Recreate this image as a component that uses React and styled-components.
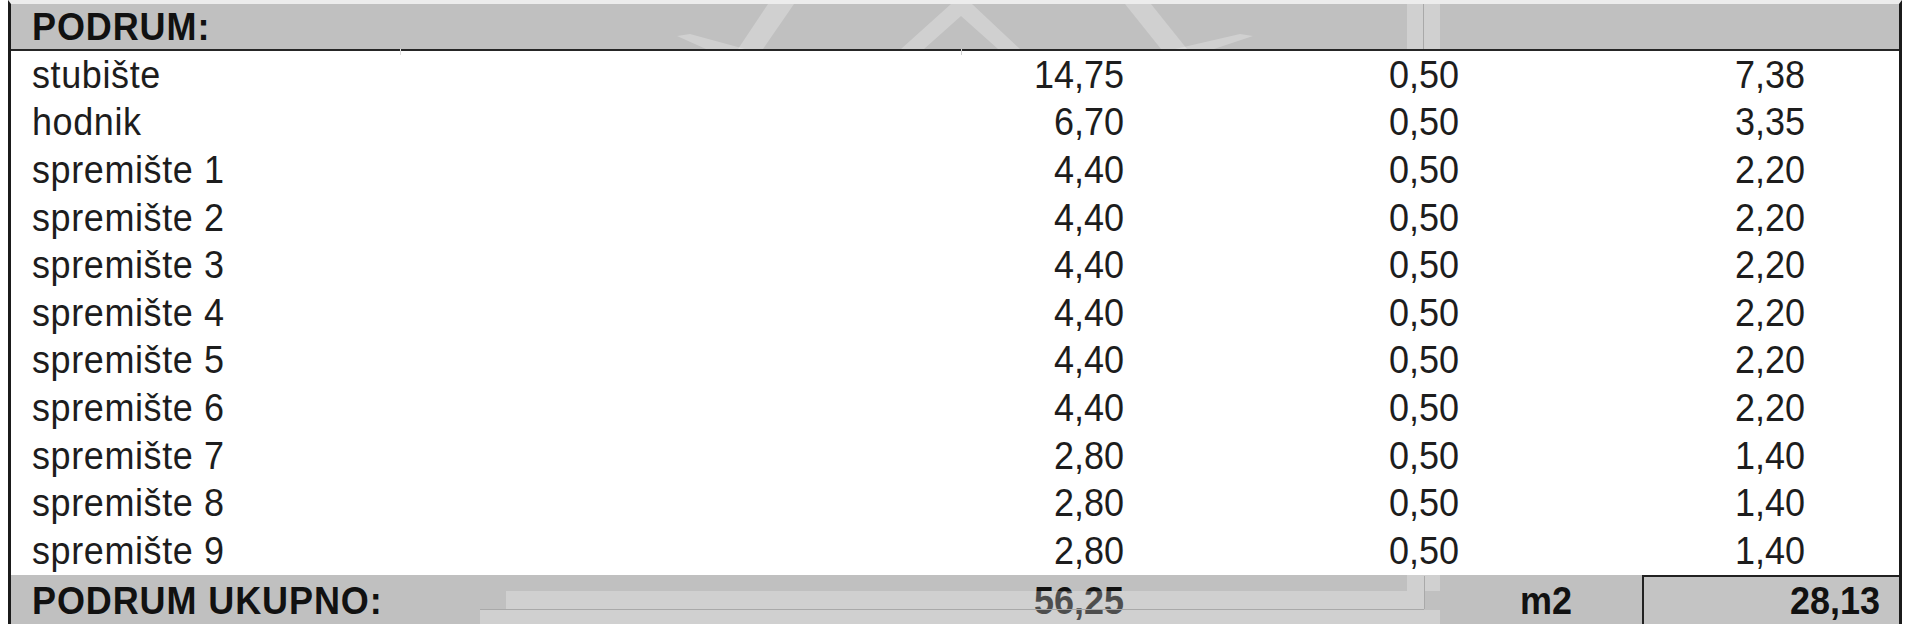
import styled, { createGlobalStyle } from "styled-components";

const GlobalStyle = createGlobalStyle`
  html, body {
    margin: 0;
    padding: 0;
    overflow: hidden;
    background: #ffffff;
  }
  body {
    font-family: "Liberation Sans", Arial, sans-serif;
  }
`;

const Page = styled.div`
  position: relative;
  width: 1920px;
  height: 624px;
  overflow: hidden;
`;

const Table = styled.div`
  box-sizing: border-box;
  margin-left: 8px;
  width: 1894px;
  border-left: 3px solid #1b1b1b;
  border-right: 3px solid #1b1b1b;
  border-top: 4px solid #ececec;
`;

const Header = styled.div`
  display: flex;
  align-items: center;
  height: 45px;
  padding-left: 21px;
  background: #c0c0c0;
  border-bottom: 2px solid #262626;
  font-size: 36px;
  font-weight: 700;
  line-height: 1;
  letter-spacing: 0.9px;
  color: #111;

  span {
    display: inline-block;
    transform: scaleY(1.1);
  }
`;

const Row = styled.div`
  display: grid;
  grid-template-columns: 1fr 224px 335px 346px 94px;
  align-items: center;
  height: 47.6px;
  font-size: 36px;
  line-height: 1;
  color: #1d1d1d;
`;

const Label = styled.div`
  padding-left: 21px;
  white-space: nowrap;
  letter-spacing: 0.6px;
  transform: scaleY(1.1);
`;

const Num = styled.div`
  text-align: right;
  transform: scaleY(1.1);
`;

const Footer = styled.div`
  display: grid;
  grid-template-columns: 1fr 224px 448px 70px 257px;
  height: 52px;
  background: #c0c0c0;
  font-size: 36px;
  font-weight: 700;
  line-height: 1;
  color: #111;
`;

const FootCell = styled.div`
  display: flex;
  align-items: center;
  justify-content: ${(p) => (p.$right ? "flex-end" : "flex-start")};
  padding-left: ${(p) => (p.$right ? 0 : 21)}px;
  letter-spacing: ${(p) => (p.$right ? 0 : 0.9)}px;
  transform: scaleY(1.1);
`;

const TotalBox = styled.div`
  display: flex;
  align-items: center;
  justify-content: flex-end;
  padding-right: 19px;
  background: #c4c4c4;
  border: 2px solid #222;
  border-right: none;

  span {
    display: inline-block;
    transform: scaleY(1.1);
  }
`;

const Watermark = styled.svg`
  position: absolute;
  left: 0;
  top: 0;
  pointer-events: none;
`;

const rows = [
  ["stubište", "14,75", "0,50", "7,38"],
  ["hodnik", "6,70", "0,50", "3,35"],
  ["spremište 1", "4,40", "0,50", "2,20"],
  ["spremište 2", "4,40", "0,50", "2,20"],
  ["spremište 3", "4,40", "0,50", "2,20"],
  ["spremište 4", "4,40", "0,50", "2,20"],
  ["spremište 5", "4,40", "0,50", "2,20"],
  ["spremište 6", "4,40", "0,50", "2,20"],
  ["spremište 7", "2,80", "0,50", "1,40"],
  ["spremište 8", "2,80", "0,50", "1,40"],
  ["spremište 9", "2,80", "0,50", "1,40"],
];

function App() {
  return (
    <Page>
      <GlobalStyle />
      <Table>
        <Header>
          <span>PODRUM:</span>
        </Header>
        {rows.map(([name, area, coef, total]) => (
          <Row key={name}>
            <Label>{name}</Label>
            <Num>{area}</Num>
            <Num>{coef}</Num>
            <Num>{total}</Num>
            <div />
          </Row>
        ))}
        <Footer>
          <FootCell>PODRUM UKUPNO:</FootCell>
          <FootCell $right>56,25</FootCell>
          <FootCell $right>m2</FootCell>
          <div />
          <TotalBox>
            <span>28,13</span>
          </TotalBox>
        </Footer>
      </Table>

      {/* faint logo watermark showing through the grey bands */}
      <Watermark width="1920" height="624" viewBox="0 0 1920 624">
        <g fill="#ffffff" fillOpacity="0.26">
          <polygon points="768,4 794,4 763,49 738,49" />
          <polygon points="677,36 690,34 745,49 706,49" />
          <polygon points="1125,4 1151,4 1187,49 1161,49" />
          <polygon points="1240,34 1253,36 1214,49 1175,49" />
          <polygon points="951,4 972,4 1020,49 998,49 961,16 924,49 901,49" />
          <rect x="1407" y="4" width="33" height="45" />
          <rect x="506" y="591" width="918" height="18" />
          <rect x="480" y="610" width="960" height="14" />
          <rect x="1407" y="575" width="33" height="16" />
        </g>
        <g stroke="#a9a9a9" strokeWidth="1">
          <line x1="1423.5" y1="4" x2="1423.5" y2="49" />
          <line x1="1424.5" y1="576" x2="1424.5" y2="609" />
          <line x1="480" y1="609.5" x2="1424" y2="609.5" />
          <line x1="961.5" y1="49" x2="961.5" y2="55" stroke="#cfcfcf" />
          <line x1="400.5" y1="49" x2="400.5" y2="55" stroke="#dddddd" />
        </g>
      </Watermark>
    </Page>
  );
}

export default App;
